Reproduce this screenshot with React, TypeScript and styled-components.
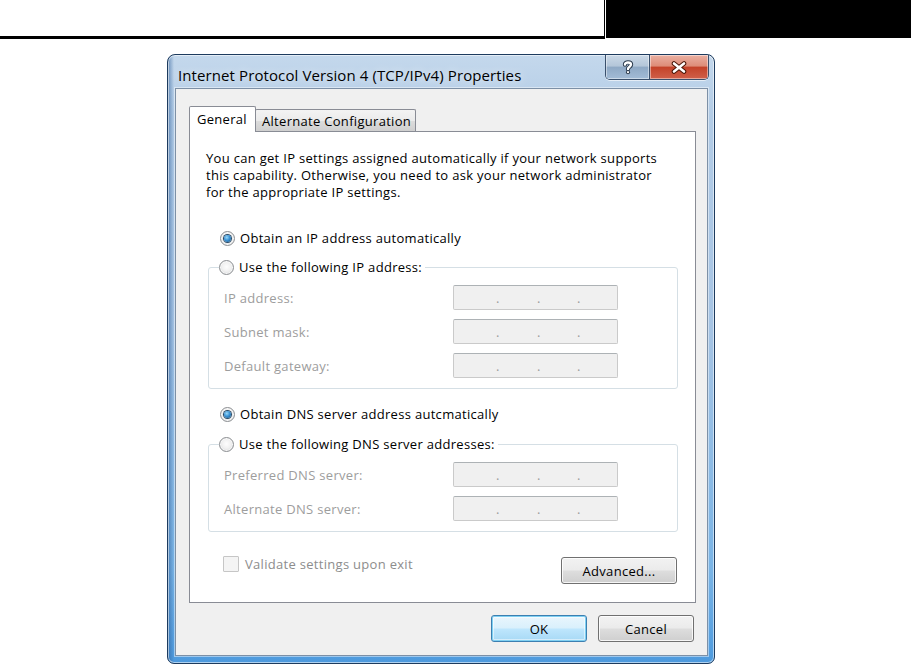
import React from "react";
import styled, { createGlobalStyle, css } from "styled-components";

const GlobalStyle = createGlobalStyle`
  html, body {
    margin: 0;
    padding: 0;
    background: #fff;
  }
  body {
    font-family: "Open Sans", "Noto Sans", Arial, sans-serif;
  }
  * {
    box-sizing: border-box;
  }
`;

const ipRows = ["IP address:", "Subnet mask:", "Default gateway:"];
const dnsRows = ["Preferred DNS server:", "Alternate DNS server:"];

const IpBox = () => (
  <IpField>
    <Dot>.</Dot>
    <Dot>.</Dot>
    <Dot>.</Dot>
  </IpField>
);

const HelpGlyph = () => (
  <svg width="12" height="15" viewBox="0 0 12 15">
    <g fill="none" strokeLinecap="round" strokeLinejoin="round">
      <path d="M3 4.5C3 1.8 9 1.8 9 4.6C9 6.8 6 6.6 6 9" stroke="#2b3a4c" strokeWidth="4.4" />
      <path d="M3 4.5C3 1.8 9 1.8 9 4.6C9 6.8 6 6.6 6 9" stroke="#fff" strokeWidth="2.4" />
    </g>
    <circle cx="6" cy="12.2" r="2" fill="#2b3a4c" />
    <circle cx="6" cy="12.2" r="1.1" fill="#fff" />
  </svg>
);

const CloseGlyph = () => (
  <svg width="16" height="13" viewBox="0 0 16 13">
    <g strokeLinecap="round">
      <path d="M3 2.5L13 10.5M13 2.5L3 10.5" stroke="#4a1608" strokeWidth="4.6" />
      <path d="M3 2.5L13 10.5M13 2.5L3 10.5" stroke="#fff" strokeWidth="2.6" />
    </g>
  </svg>
);

export default function App() {
  return (
    <>
      <GlobalStyle />
      <Header>
        <HeaderRule />
        <HeaderBlock />
      </Header>
      <Stage>
        <Window>
          <TitleBar>
            <Title>Internet Protocol Version 4 (TCP/IPv4) Properties</Title>
            <Caption>
              <CaptionButton $kind="help">
                <HelpGlyph />
              </CaptionButton>
              <CaptionButton $kind="close">
                <CloseGlyph />
              </CaptionButton>
            </Caption>
          </TitleBar>
          <Client>
            <TabStrip>
              <Tab $active>General</Tab>
              <Tab>Alternate Configuration</Tab>
            </TabStrip>
            <Panel>
              <Intro>
                You can get IP settings assigned automatically if your network supports
                <br />
                this capability. Otherwise, you need to ask your network administrator
                <br />
                for the appropriate IP settings.
              </Intro>

              <OptionRow $gap={28}>
                <Radio $checked />
                <OptionText>Obtain an IP address automatically</OptionText>
              </OptionRow>

              <Group $gap={11}>
                <GroupLegend>
                  <Radio />
                  <OptionText>Use the following IP address:</OptionText>
                </GroupLegend>
                <FieldList>
                  {ipRows.map((label) => (
                    <FieldRow key={label}>
                      <FieldLabel>{label}</FieldLabel>
                      <IpBox />
                    </FieldRow>
                  ))}
                </FieldList>
              </Group>

              <OptionRow $gap={16}>
                <Radio $checked />
                <OptionText>Obtain DNS server address autcmatically</OptionText>
              </OptionRow>

              <Group $gap={12}>
                <GroupLegend>
                  <Radio />
                  <OptionText>Use the following DNS server addresses:</OptionText>
                </GroupLegend>
                <FieldList>
                  {dnsRows.map((label) => (
                    <FieldRow key={label}>
                      <FieldLabel>{label}</FieldLabel>
                      <IpBox />
                    </FieldRow>
                  ))}
                </FieldList>
              </Group>

              <PanelFooter>
                <CheckRow>
                  <CheckBox />
                  <CheckText>Validate settings upon exit</CheckText>
                </CheckRow>
                <Button $width={116}>Advanced...</Button>
              </PanelFooter>
            </Panel>

            <DialogButtons>
              <Button $width={96} $default>
                OK
              </Button>
              <Button $width={96}>Cancel</Button>
            </DialogButtons>
          </Client>
        </Window>
      </Stage>
    </>
  );
}

const Header = styled.header`
  display: flex;
  height: 39px;
`;

const HeaderRule = styled.div`
  width: 605px;
  height: 39px;
  border-right: 1px solid #000;
  border-bottom: 3px solid #000;
`;

const HeaderBlock = styled.div`
  flex: 1;
  height: 38px;
  margin-left: 1px;
  background: #000;
`;

const Stage = styled.main`
  padding: 15px 0 0 167px;
`;

const Window = styled.div`
  width: 548px;
  display: flex;
  flex-direction: column;
  padding: 0 6px 7px 7px;
  border: 1px solid #1d3b5e;
  border-radius: 8px 8px 7px 7px;
  background:
    linear-gradient(90deg, rgba(40, 90, 150, 0.55) 0px, rgba(40, 90, 150, 0) 6px),
    linear-gradient(180deg, #c4d8ec 0%, #b3cce6 10%, #a6c4e4 45%, #79b4e6 85%, #4d9ade 100%);
  box-shadow: inset 0 0 0 1px rgba(255, 255, 255, 0.55);
`;

const TitleBar = styled.div`
  height: 33px;
  display: flex;
  justify-content: space-between;
  align-items: flex-start;
`;

const Title = styled.div`
  margin: 10px 0 0 3px;
  font-size: 15px;
  letter-spacing: 0.1px;
  color: #000;
  text-shadow: 0 0 8px rgba(255, 255, 255, 0.9);
  white-space: nowrap;
`;

const Caption = styled.div`
  display: flex;
  height: 25px;
  margin-right: -1px;
  border: 1px solid #3a506c;
  border-top: none;
  border-radius: 0 0 5px 5px;
  overflow: hidden;
  box-shadow: 0 1px 0 rgba(255, 255, 255, 0.6);
`;

const CaptionButton = styled.div<{ $kind: "help" | "close" }>`
  display: flex;
  align-items: center;
  justify-content: center;
  height: 100%;
  box-shadow: inset 0 0 0 1px rgba(255, 255, 255, 0.45);
  ${({ $kind }) =>
    $kind === "help"
      ? css`
          width: 44px;
          border-right: 1px solid #3a506c;
          background: linear-gradient(180deg, #cbd9e7 0%, #b4c6d9 45%, #8fa9c5 52%, #a3bcd6 100%);
        `
      : css`
          width: 58px;
          background: linear-gradient(180deg, #eab0a2 0%, #de8d79 45%, #c4432a 52%, #d0604a 100%);
        `}
`;

const Client = styled.div`
  display: flex;
  flex-direction: column;
  padding: 17px 12px 13px 13px;
  background: #f0f0f0;
  border: 1px solid #7d90a6;
  box-shadow: 0 0 0 1px rgba(255, 255, 255, 0.45);
  font-size: 13px;
  letter-spacing: 0.3px;
  color: #000;
`;

const TabStrip = styled.div`
  display: flex;
  align-items: flex-end;
  height: 25px;
  position: relative;
  z-index: 1;
`;

const Tab = styled.div<{ $active?: boolean }>`
  display: flex;
  align-items: center;
  border: 1px solid #898c95;
  border-bottom: none;
  white-space: nowrap;
  ${({ $active }) =>
    $active
      ? css`
          width: 67px;
          height: 26px;
          margin-bottom: -1px;
          padding: 0 0 1px 7px;
          background: #fff;
          border-radius: 2px 2px 0 0;
        `
      : css`
          width: 161px;
          height: 22px;
          margin-left: -1px;
          padding: 0 0 0 6px;
          background: linear-gradient(180deg, #f3f3f3 0%, #ebebeb 50%, #dddddd 51%, #cfcfcf 100%);
          border-radius: 2px 2px 0 0;
        `}
`;

const Panel = styled.section`
  display: flex;
  flex-direction: column;
  width: 507px;
  padding: 18px 0 18px 0;
  background: #fff;
  border: 1px solid #898c95;
`;

const Intro = styled.p`
  margin: 0;
  padding-left: 16px;
  line-height: 17px;
  white-space: nowrap;
`;

const OptionRow = styled.div<{ $gap: number }>`
  display: flex;
  align-items: center;
  height: 18px;
  margin-top: ${({ $gap }) => $gap}px;
  padding-left: 30px;
`;

const Radio = styled.span<{ $checked?: boolean }>`
  position: relative;
  flex: none;
  width: 15px;
  height: 15px;
  border-radius: 50%;
  border: 1px solid #8b8e91;
  background: radial-gradient(circle at 50% 45%, #fdfdfd 0%, #f1f1f1 45%, #d0d2d4 100%);
  box-shadow: inset 0 0 0 1px rgba(255, 255, 255, 0.7);
  ${({ $checked }) =>
    $checked &&
    css`
      &::after {
        content: "";
        position: absolute;
        left: 3px;
        top: 3px;
        width: 7px;
        height: 7px;
        border-radius: 50%;
        background: radial-gradient(circle at 40% 35%, #9ad8f6 0%, #3b93d6 45%, #17507f 100%);
        box-shadow: 0 0 0 1px #2a4a66;
      }
    `}
`;

const OptionText = styled.span`
  margin-left: 5px;
  white-space: nowrap;
`;

const Group = styled.fieldset<{ $gap: number }>`
  margin: ${({ $gap }) => $gap}px 17px 0 18px;
  padding: 0 0 10px 0;
  min-width: 0;
  border: 1px solid #d5dfe5;
  border-radius: 3px;
`;

const GroupLegend = styled.legend`
  display: flex;
  align-items: center;
  height: 18px;
  margin-left: 10px;
  padding: 0 3px 0 0;
`;

const FieldList = styled.div`
  display: flex;
  flex-direction: column;
  gap: 9px;
  padding: 9px 0 0 15px;
`;

const FieldRow = styled.div`
  display: grid;
  grid-template-columns: 229px 165px;
  align-items: center;
  height: 25px;
`;

const FieldLabel = styled.span`
  color: #9d9d9d;
  white-space: nowrap;
`;

const IpField = styled.div`
  display: grid;
  grid-template-columns: 41px 40px 40px;
  height: 25px;
  padding: 0 0 0 42px;
  align-items: center;
  background: #f0f0f0;
  border: 1px solid #cacaca;
  border-top-color: #adb2b5;
  border-radius: 2px;
  color: #9d9d9d;
`;

const Dot = styled.span`
  line-height: 1;
  padding-top: 1px;
`;

const PanelFooter = styled.div`
  display: flex;
  justify-content: space-between;
  align-items: flex-start;
  margin-top: 25px;
  padding: 0 18px 0 33px;
`;

const CheckRow = styled.div`
  display: flex;
  align-items: center;
  height: 16px;
  margin-top: -1px;
`;

const CheckBox = styled.span`
  width: 16px;
  height: 16px;
  border: 1px solid #c6c6c6;
  border-radius: 1px;
  background: #f4f4f4;
`;

const CheckText = styled.span`
  margin-left: 6px;
  color: #8d8d8d;
  white-space: nowrap;
`;

const Button = styled.div<{ $width: number; $default?: boolean }>`
  display: flex;
  align-items: center;
  justify-content: center;
  width: ${({ $width }) => $width}px;
  height: 27px;
  border: 1px solid #707070;
  border-radius: 3px;
  background: linear-gradient(180deg, #f2f2f2 0%, #ebebeb 48%, #dddddd 52%, #cfcfcf 100%);
  box-shadow: inset 0 0 0 1px rgba(255, 255, 255, 0.8);
  white-space: nowrap;
  ${({ $default }) =>
    $default &&
    css`
      border-color: #3c7fb1;
      background: linear-gradient(180deg, #eaf6fd 0%, #d9f0fc 48%, #bee6fd 52%, #a7d9f5 100%);
      box-shadow: inset 0 0 0 1px #7fd0f2, inset 0 0 0 2px rgba(255, 255, 255, 0.5);
    `}
`;

const DialogButtons = styled.div`
  display: flex;
  justify-content: flex-end;
  gap: 11px;
  margin: 12px 1px 0 0;
`;
